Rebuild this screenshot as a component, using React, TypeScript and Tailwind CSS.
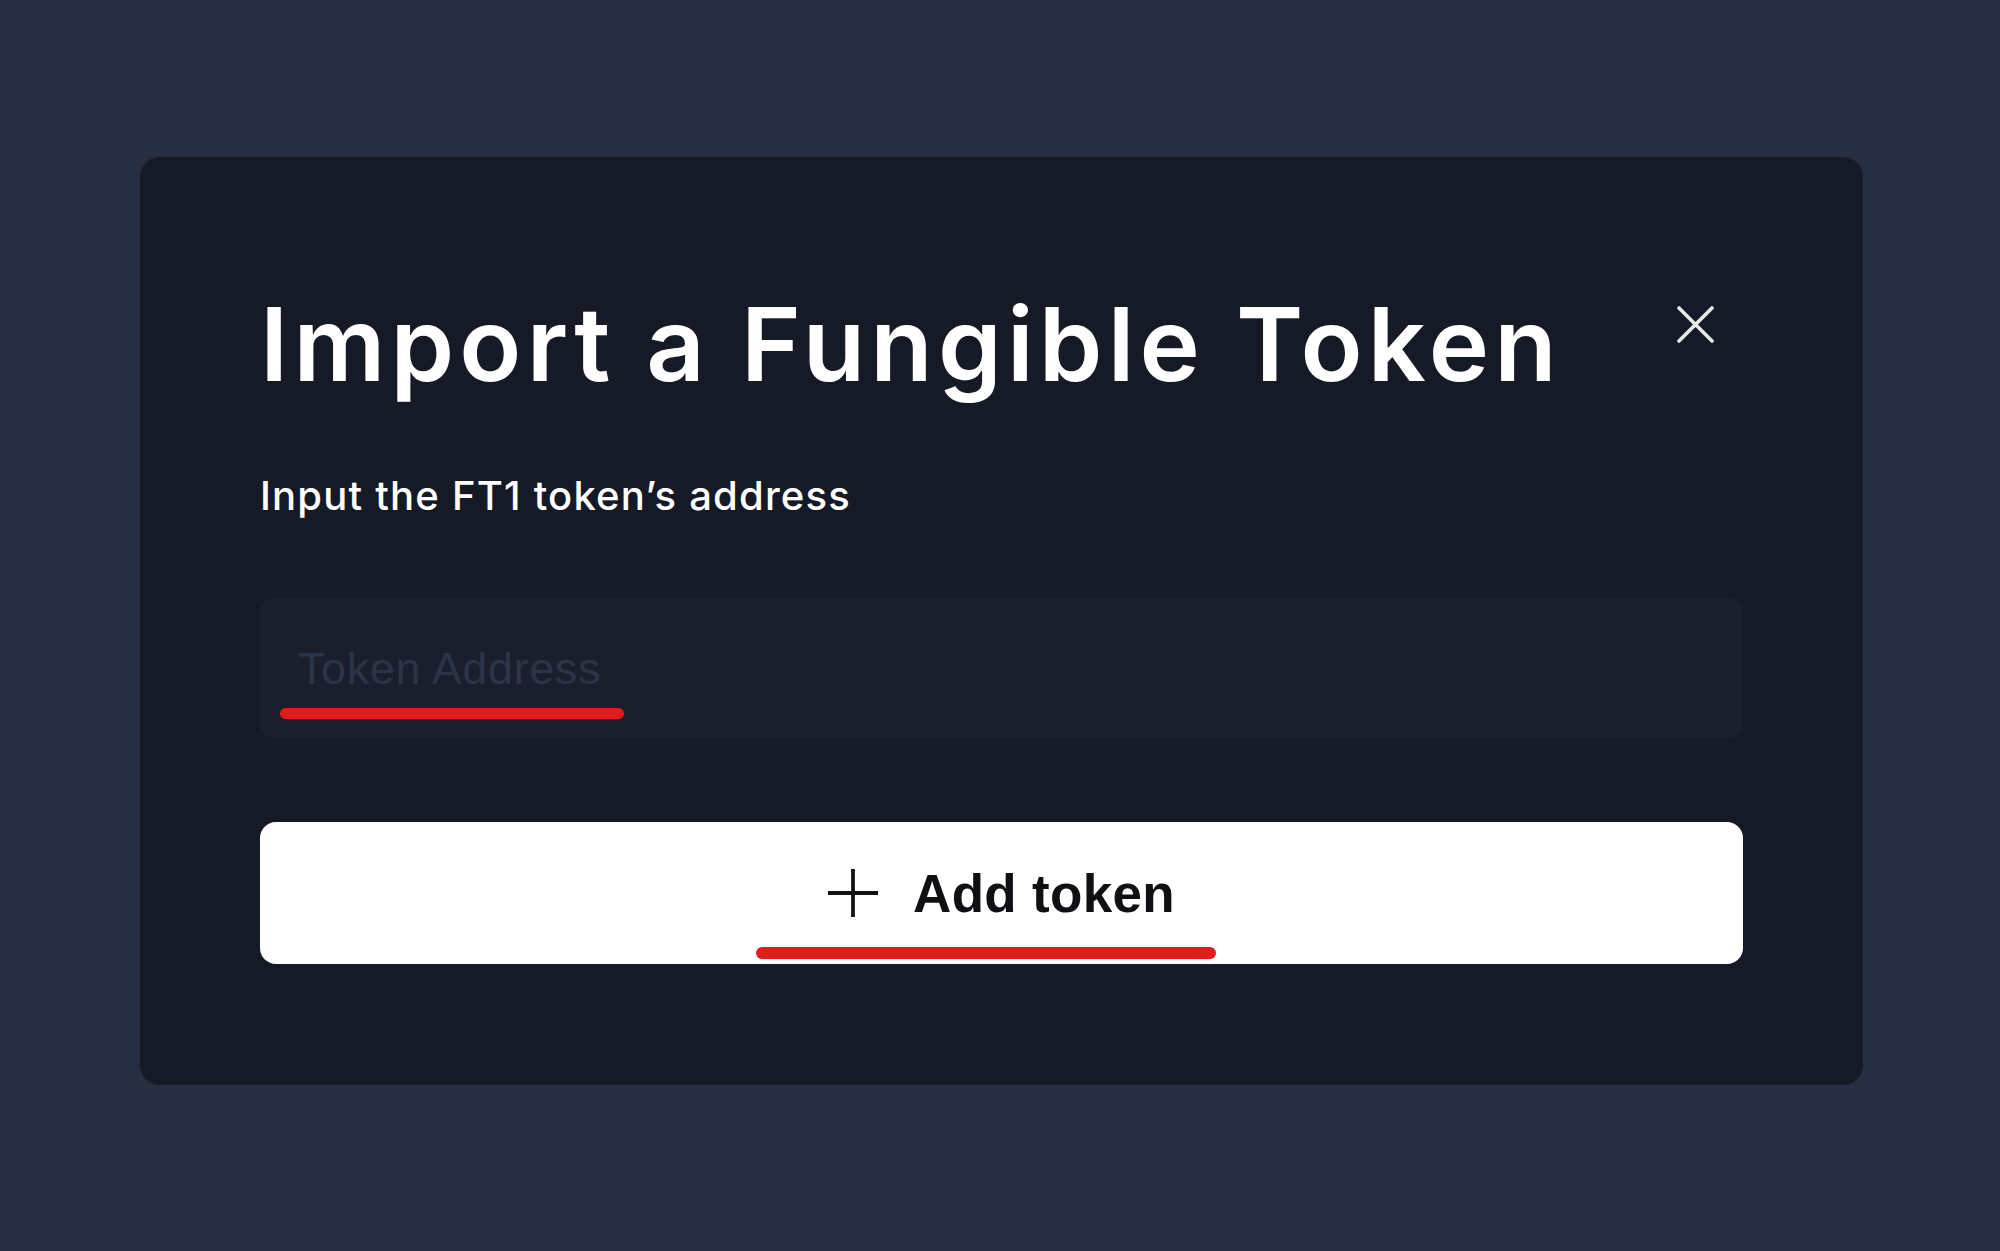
import React from "react";

export default function App() {
  return (
    <div className="min-h-[1251px] w-full bg-[#272e42] pt-[157px] pl-[140px]">
      <div className="w-[1723px] h-[928px] rounded-[20px] bg-[#161a26] px-[120px] pt-[136px]">
        <div className="flex items-start justify-between">
          <h1
            className="text-[102px] leading-none font-semibold text-white tracking-[5.2px]"
            style={{ fontFamily: "Inter, 'Noto Sans', sans-serif" }}
          >
            Import a Fungible Token
          </h1>
          <button className="mt-[13px] mr-[29px] w-[37px] h-[37px] flex items-center justify-center" aria-label="Close">
            <svg width="37" height="37" viewBox="0 0 37 37" fill="none">
              <path d="M2 2L35 35M35 2L2 35" stroke="#e8e8ea" strokeWidth="3.6" strokeLinecap="round" />
            </svg>
          </button>
        </div>
        <p
          className="mt-[81px] text-[40px] leading-none font-medium text-white tracking-[1.2px]"
          style={{ fontFamily: "Inter, 'Noto Sans', sans-serif" }}
        >
          Input the FT1 token’s address
        </p>
        <div className="relative mt-[81px] h-[142px] rounded-[16px] bg-[#1b1f2d] flex items-center pl-[38px]">
          <span
            className="text-[45px] leading-none text-[#2c3448] tracking-[0.6px]"
            style={{ fontFamily: "'Liberation Sans', Arial, sans-serif" }}
          >
            Token Address
          </span>
          <div className="absolute left-[20px] top-[111px] w-[344px] h-[11px] rounded-full bg-[#e21b1b]" />
        </div>
        <div className="relative mt-[83px] h-[142px] rounded-[16px] bg-white flex items-center justify-center gap-[35px]">
          <svg width="50" height="48" viewBox="0 0 50 48" fill="none">
            <path d="M25 0V48M0 24H50" stroke="#121212" strokeWidth="3.8" />
          </svg>
          <span
            className="text-[53px] leading-none font-bold text-[#101014] tracking-[0.3px]"
            style={{ fontFamily: "'Liberation Sans', Arial, sans-serif" }}
          >
            Add token
          </span>
          <div className="absolute left-[496px] top-[125px] w-[460px] h-[12px] rounded-full bg-[#e21b1b]" />
        </div>
      </div>
    </div>
  );
}
